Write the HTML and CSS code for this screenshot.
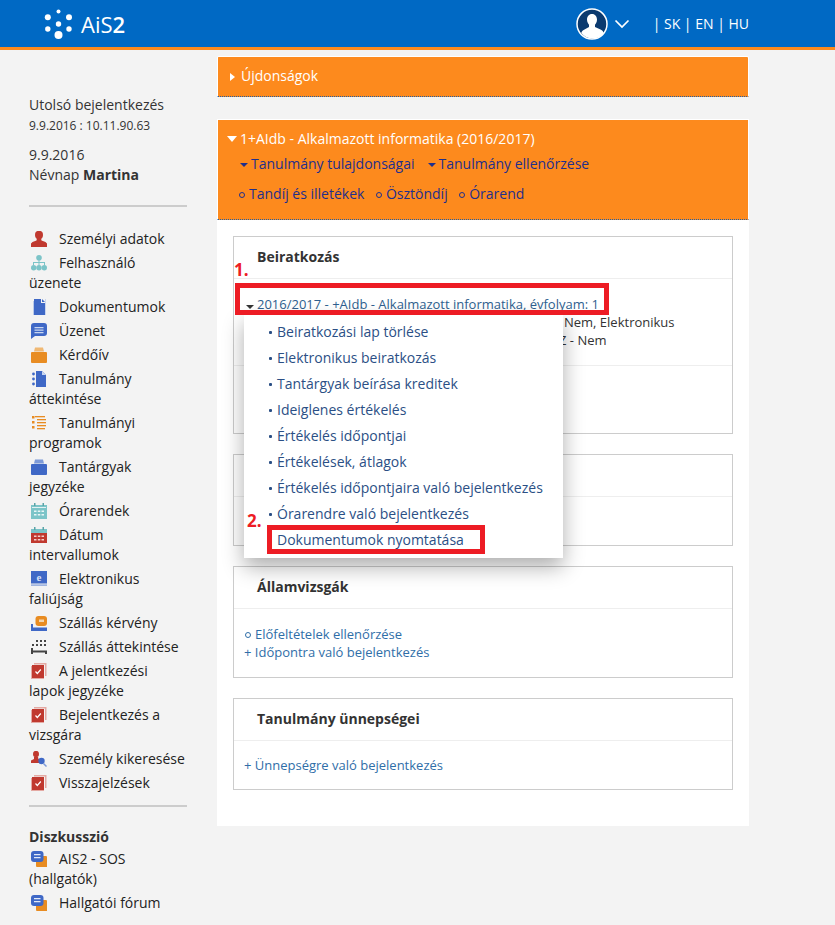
FILE: index.html
```html
<!DOCTYPE html>
<html lang="hu">
<head>
<meta charset="utf-8">
<title>AiS2</title>
<link rel="stylesheet" href="styles.css">
</head>
<body>
<svg class="defs" width="0" height="0" aria-hidden="true">
  <symbol id="i-person" viewBox="0 0 16 16"><ellipse cx="8" cy="4" rx="4" ry="4.2" fill="#c0392f"/><path d="M6 7h4l.5 2.5 4 1.5 1.500 1.500V16H0v-3.500L1.500 11l4-1.500z" fill="#c0392f"/></symbol>
  <symbol id="i-org" viewBox="0 0 16 16"><circle cx="8" cy="2.800" r="2.800" fill="#7cc4c8"/><path d="M7.500 4h1v3h5.500v3h-1V8H8.500v2h-1V8H3v2H2V7h5.500z" fill="#7cc4c8"/><circle cx="2.700" cy="12.800" r="2.700" fill="#7cc4c8"/><circle cx="8" cy="12.800" r="2.700" fill="#7cc4c8"/><circle cx="13.300" cy="12.800" r="2.700" fill="#7cc4c8"/></symbol>
  <symbol id="i-doc" viewBox="0 0 16 16"><path d="M2 2h1v13h10v1H2z" fill="#b9c9ea"/><path d="M3 0h7v4h4v12H3z" fill="#3f68c6"/><path d="M11 0l3 3h-3z" fill="#3f68c6"/><path d="M14 0h1v16h-1z" fill="#c9d6f0"/></symbol>
  <symbol id="i-msg" viewBox="0 0 16 16"><path d="M3 0h10a3 3 0 0 1 3 3v7a3 3 0 0 1-3 3H4l-4 3V3a3 3 0 0 1 3-3z" fill="#3f68c6"/><path d="M3.500 4h9v1.300h-9zM3.500 6.500h9v1.300h-9zM3.500 9h9v1.300h-9z" fill="#c9d6f0"/></symbol>
  <symbol id="i-case" viewBox="0 0 16 16"><path d="M4 .5h8l1 4H3z" fill="#f0b873"/><rect y="5" width="16" height="11" rx="1" fill="#e88c22"/></symbol>
  <symbol id="i-bag" viewBox="0 0 16 16"><path d="M4 .5h8l1 4H3z" fill="#7d9ad8"/><rect y="5" width="16" height="11" rx="1" fill="#3f68c6"/></symbol>
  <symbol id="i-study" viewBox="0 0 16 16"><path d="M5 0h6l4 4v12H5z" fill="#3f68c6"/><path d="M11 0l4 4h-4z" fill="#c9d6f0"/><circle cx="2.500" cy="3" r="1.400" fill="#3f68c6"/><circle cx="2.500" cy="8" r="1.400" fill="#3f68c6"/><circle cx="2.500" cy="13" r="1.400" fill="#3f68c6"/></symbol>
  <symbol id="i-prog" viewBox="0 0 16 16"><g fill="#e88c22"><rect x="4" y="1" width="10" height="1.300"/><rect x="6" y="4" width="9" height="1.300"/><rect x="6" y="7" width="9" height="1.300"/><rect x="6" y="10" width="9" height="1.300"/><rect x="6" y="13" width="8" height="1.300"/><rect x="1" y="1" width="2.500" height="2.500"/><rect x="1" y="6" width="2.500" height="2.500"/><rect x="1" y="11" width="2.500" height="2.500"/></g></symbol>
  <symbol id="i-cal" viewBox="0 0 16 16"><path d="M0 2h16v14H0z" fill="#7cc4c8"/><path d="M3 0h1.500v3H3zM11.500 0H13v3h-1.500z" fill="#5aa4a8"/><path d="M1 4h14v1H1z" fill="#e3f2f3"/><g fill="#eaf6f6"><rect x="3" y="7.500" width="2.500" height="1.500"/><rect x="6.800" y="7.500" width="2.500" height="1.500"/><rect x="10.500" y="7.500" width="2.500" height="1.500"/><rect x="3" y="11" width="2.500" height="1.500"/><rect x="6.800" y="11" width="2.500" height="1.500"/><rect x="10.500" y="11" width="2.500" height="1.500"/></g></symbol>
  <symbol id="i-calr" viewBox="0 0 16 16"><path d="M0 2h16v5H0z" fill="#7cc4c8"/><path d="M0 6h16v10H0z" fill="#c0392f"/><path d="M3 0h1.500v3H3zM11.500 0H13v3h-1.500z" fill="#5aa4a8"/><g fill="#f3d0cc"><rect x="3" y="8.500" width="2.500" height="1.500"/><rect x="6.800" y="8.500" width="2.500" height="1.500"/><rect x="10.500" y="8.500" width="2.500" height="1.500"/><rect x="3" y="12" width="2.500" height="1.500"/><rect x="6.800" y="12" width="2.500" height="1.500"/><rect x="10.500" y="12" width="2.500" height="1.500"/></g></symbol>
  <symbol id="i-bed" viewBox="0 0 16 16"><path d="M0 9h2v3.500h14V16H0z" fill="#3f68c6"/><rect x="4.500" y="1" width="11.500" height="10" rx="3" fill="#e88c22"/><rect x="8" y="4.500" width="5" height="2.500" fill="#f5d6ad"/></symbol>
  <symbol id="i-beds" viewBox="0 0 16 16"><g fill="#444"><rect x="5" y="1" width="2" height="2"/><rect x="9" y="1" width="2" height="2"/><rect x="13" y="1" width="2" height="2"/><rect x="1" y="5" width="2" height="2"/><rect x="5" y="5" width="2" height="2"/><rect x="9" y="5" width="2" height="2"/><rect x="13" y="5" width="2" height="2"/><path d="M0 9h2v2.500h14V15h-2v-1.500H2V15H0z"/></g></symbol>
  <symbol id="i-check" viewBox="0 0 16 16"><path d="M3 0h12.500v13h-1.500V1.500H3z" fill="#e4a9a3"/><path d="M0 3h1v12h12v1H0z" fill="#e4a9a3"/><rect x="1" y="2" width="12" height="13" fill="#c0392f"/><path d="M4.500 8.500l1.800 2 3.500-4" fill="none" stroke="#fff" stroke-width="1.200"/></symbol>
  <symbol id="i-search" viewBox="0 0 16 16"><ellipse cx="5" cy="3" rx="3" ry="3.200" fill="#c0392f"/><path d="M3 6h4l.5 2 2 1-1.500 3H0V9.500L3 8z" fill="#c0392f"/><circle cx="10.500" cy="10" r="3.200" fill="#3f68c6"/><path d="M12.500 12.500l3 3" stroke="#7d9ad8" stroke-width="1.500"/></symbol>
  <symbol id="i-forum" viewBox="0 0 16 16"><path d="M8 5h7a1 1 0 0 1 1 1v10H6a1 1 0 0 1-1-1V8z" fill="#e88c22"/><rect width="12.500" height="11" rx="3" fill="#3f68c6"/><path d="M3 3h6.500v1.300H3zM3 6h6.500v1.300H3z" fill="#e3eaf8"/></symbol>
</svg>

<header class="topbar">
  <a class="logo">
    <svg class="logo-dots" width="30" height="32" viewBox="0 0 30 32" aria-hidden="true">
      <g fill="#fff"><circle cx="14.500" cy="2.500" r="2"/><circle cx="3.800" cy="8.300" r="3"/><circle cx="25" cy="8.300" r="3"/><circle cx="14.500" cy="15" r="2.700"/><circle cx="3.800" cy="20" r="2.700"/><circle cx="25" cy="20" r="2.700"/><circle cx="14.500" cy="26" r="4"/></g>
    </svg>
    <span class="logo-text">AiS<b>2</b></span>
  </a>
  <div class="top-right">
    <svg class="avatar" width="32" height="32" viewBox="0 0 32 32" aria-hidden="true">
      <circle cx="16" cy="16" r="15" fill="#0b3a6f" stroke="#fff" stroke-width="1.500"/>
      <path d="M16 6c3.200 0 5 2.500 5 5.500 0 2.300-1 4.200-2 5.300v2.200l5.500 2.500c2 1 2.800 2 3.200 3.500A14.500 14.500 0 0 1 16 30.500 14.500 14.500 0 0 1 5.300 25c.4-1.500 1.200-2.500 3.200-3.500L13 19v-2.200c-1-1.100-2-3-2-5.300C11 8.500 12.800 6 16 6z" fill="#fff"/>
    </svg>
    <svg class="chevron" width="16" height="10" viewBox="0 0 16 10" aria-hidden="true"><path d="M1.500 1.500L8 8l6.500-6.500" fill="none" stroke="#fff" stroke-width="1.700"/></svg>
    <nav class="langs">| SK | EN | HU</nav>
  </div>
</header>

<div class="layout">
  <aside class="sidebar">
    <p class="login">Utolsó bejelentkezés<br><small>9.9.2016 : 10.11.90.63</small></p>
    <p class="today">9.9.2016<br>Névnap <b>Martina</b></p>
    <hr class="rule">
    <ul class="menu">
      <li><svg class="ico"><use href="#i-person"/></svg>Személyi adatok</li>
      <li><svg class="ico"><use href="#i-org"/></svg>Felhasználó üzenete</li>
      <li><svg class="ico"><use href="#i-doc"/></svg>Dokumentumok</li>
      <li><svg class="ico"><use href="#i-msg"/></svg>Üzenet</li>
      <li><svg class="ico"><use href="#i-case"/></svg>Kérdőív</li>
      <li><svg class="ico"><use href="#i-study"/></svg>Tanulmány áttekintése</li>
      <li><svg class="ico"><use href="#i-prog"/></svg>Tanulmányi programok</li>
      <li><svg class="ico"><use href="#i-bag"/></svg>Tantárgyak jegyzéke</li>
      <li><svg class="ico"><use href="#i-cal"/></svg>Órarendek</li>
      <li><svg class="ico"><use href="#i-calr"/></svg>Dátum intervallumok</li>
      <li><svg class="ico" viewBox="0 0 16 16"><rect width="16" height="12.500" fill="#3f68c6"/><rect y="13.500" width="16" height="1.200" fill="#7d9ad8"/><text x="8" y="10" text-anchor="middle" class="ico-e">e</text></svg>Elektronikus faliújság</li>
      <li><svg class="ico"><use href="#i-bed"/></svg>Szállás kérvény</li>
      <li><svg class="ico"><use href="#i-beds"/></svg>Szállás áttekintése</li>
      <li><svg class="ico"><use href="#i-check"/></svg>A jelentkezési<br>lapok jegyzéke</li>
      <li><svg class="ico"><use href="#i-check"/></svg>Bejelentkezés a vizsgára</li>
      <li><svg class="ico"><use href="#i-search"/></svg>Személy kikeresése</li>
      <li><svg class="ico"><use href="#i-check"/></svg>Visszajelzések</li>
    </ul>
    <hr class="rule rule-low">
    <h3 class="side-title">Diszkusszió</h3>
    <ul class="menu menu-forum">
      <li><svg class="ico"><use href="#i-forum"/></svg>AIS2 - SOS (hallgatók)</li>
      <li><svg class="ico"><use href="#i-forum"/></svg>Hallgatói fórum</li>
    </ul>
  </aside>

  <main class="main">
    <section class="banner banner-news">
      <span class="tri-right"></span>Újdonságok
    </section>

    <div class="study">
      <section class="banner banner-study">
        <div class="study-title"><span class="tri-down"></span>1+AIdb - Alkalmazott informatika (2016/2017)</div>
        <div class="study-links">
          <a class="sl"><span class="tri-navy"></span>Tanulmány tulajdonságai</a>
          <a class="sl"><span class="tri-navy"></span>Tanulmány ellenőrzése</a>
        </div>
        <div class="study-links study-links-2">
          <a class="sl"><span class="ring"></span>Tandíj és illetékek</a>
          <a class="sl"><span class="ring"></span>Ösztöndíj</a>
          <a class="sl"><span class="ring"></span>Órarend</a>
        </div>
      </section>

      <div class="study-body">
        <section class="card card-enrol">
          <h2 class="card-head">Beiratkozás</h2>
          <div class="enrol-body">
            <a class="enrol-link"><span class="tri-dark"></span><u>2016/2017 - +AIdb - Alkalmazott informatika, évfolyam: 1</u></a>
            <p class="enrol-line">Nem, Elektronikus</p>
            <p class="enrol-line enrol-line-2">Z - Nem</p>
          </div>
          <div class="enrol-foot"></div>
        </section>

        <section class="card card-hidden">
          <h2 class="card-head">&nbsp;</h2>
        </section>

        <section class="card card-exam">
          <h2 class="card-head">Államvizsgák</h2>
          <div class="card-links">
            <a class="blue-link"><span class="ring ring-blue"></span>Előfeltételek ellenőrzése</a>
            <a class="blue-link">+ Időpontra való bejelentkezés</a>
          </div>
        </section>

        <section class="card card-grad">
          <h2 class="card-head">Tanulmány ünnepségei</h2>
          <div class="card-links card-links-tight">
            <a class="blue-link">+ Ünnepségre való bejelentkezés</a>
          </div>
        </section>

        <ul class="dropdown">
          <li>Beiratkozási lap törlése</li>
          <li>Elektronikus beiratkozás</li>
          <li>Tantárgyak beírása kreditek</li>
          <li>Ideiglenes értékelés</li>
          <li>Értékelés időpontjai</li>
          <li>Értékelések, átlagok</li>
          <li>Értékelés időpontjaira való bejelentkezés</li>
          <li>Órarendre való bejelentkezés</li>
          <li>Dokumentumok nyomtatása</li>
        </ul>
        <div class="mark mark-1"></div>
        <div class="mark mark-2"></div>
        <span class="mark-label label-1">1.</span>
        <span class="mark-label label-2">2.</span>
      </div>
    </div>
  </main>
</div>
</body>
</html>
```

FILE: styles.css
```css
* { box-sizing: border-box; }
html, body { margin: 0; padding: 0; }
body {
  background: #f3f3f3;
  color: #333;
  font-family: "Open Sans", "Liberation Sans", sans-serif;
  font-size: 14px;
  line-height: 20px;
  height: 925px;
  overflow: hidden;
}
.defs { position: absolute; }

/* top bar */
.topbar {
  height: 50px;
  background: #0069c4;
  border-bottom: 3px solid #fd8a1d;
  display: flex;
  align-items: center;
  padding: 0 86px 0 44px;
  color: #fff;
}
.logo { display: flex; align-items: center; gap: 7px; }
.logo-dots { display: block; margin-top: 3px; }
.logo-text { font-size: 22px; line-height: 30px; }
.logo-text b { font-weight: 600; }
.top-right { margin-left: auto; display: flex; align-items: center; }
.avatar { display: block; }
.chevron { display: block; margin-left: 6px; }
.langs { margin-left: 23px; font-size: 14px; }

/* layout */
.layout { display: flex; align-items: flex-start; padding-left: 29px; }
.sidebar { width: 158px; padding-top: 45px; flex: none; }
.login, .today { margin: 0; }
.login small { font-size: 12px; }
.today { margin-top: 9px; }
.rule { border: 0; height: 2px; background: #ccc; margin: 20px 0 22px; }
.rule-low { margin: 12px 0 20px; }
.menu { list-style: none; margin: 0; padding: 0; color: #222; }
.menu li { margin-bottom: 4px; }
.ico { width: 16px; height: 16px; margin: 0 12px 0 2px; vertical-align: -3px; }
.ico-e { font-family: "Liberation Serif", serif; font-size: 11px; font-weight: 700; fill: #d5e0f5; }
.side-title { margin: 0 0 2px; font-size: 14px; line-height: 20px; font-weight: 700; }

/* main */
.main { width: 532px; margin-left: 30px; flex: none; padding-top: 6px; }
.banner {
  background: #fd8a1d;
  border: 1px solid #fff;
  border-bottom: 1px dotted #1f5fa8;
}
.banner-news {
  height: 41px;
  color: #fff;
  padding: 9px 0 0 12px;
  border-radius: 2px 2px 0 0;
}
.tri-right {
  display: inline-block;
  border-left: 5px solid #fff;
  border-top: 4.500px solid transparent;
  border-bottom: 4.500px solid transparent;
  margin-right: 6px;
}
.study { margin-top: 22px; background: #fff; height: 707px; }
.banner-study { height: 101px; padding: 9px 0 0 9px; }
.study-title { color: #fff; }
.tri-down {
  display: inline-block;
  border-top: 6px solid #fff;
  border-left: 5px solid transparent;
  border-right: 5px solid transparent;
  margin-right: 3px;
  vertical-align: 2px;
}
.study-links { display: flex; gap: 13px; margin: 5px 0 0 13px; color: #1f2f8c; }
.study-links-2 { margin: 10px 0 0 12px; gap: 11.500px; }
.sl { white-space: nowrap; }
.tri-navy {
  display: inline-block;
  border-top: 4px solid #1f2f8c;
  border-left: 4px solid transparent;
  border-right: 4px solid transparent;
  margin-right: 3px;
  vertical-align: 2px;
}
.ring {
  display: inline-block;
  width: 6px;
  height: 6px;
  border: 1px solid #1f2f8c;
  border-radius: 50%;
  margin-right: 4px;
  vertical-align: 1px;
}
.ring-blue { border-color: #2f6ea8; margin-left: 1px; }

.study-body { position: relative; padding: 16px 16px 0; }
.card { background: #fff; border: 1px solid #ccc; margin-bottom: 20px; }
.card-head {
  margin: 0;
  height: 42px;
  padding: 10px 0 0 23px;
  font-size: 14px;
  line-height: 20px;
  font-weight: 700;
  color: #333;
  border-bottom: 1px solid #eee;
}
.enrol-body { height: 87px; padding: 16px 0 0 9px; font-size: 13px; line-height: 18px; border-bottom: 1px solid #eee; }
.enrol-link { display: block; color: #2f5f8f; white-space: nowrap; }
.tri-dark {
  display: inline-block;
  border-top: 4px solid #333;
  border-left: 4px solid transparent;
  border-right: 4px solid transparent;
  margin: 0 3px 0 3px;
  vertical-align: 0;
}
.enrol-line { margin: 0 0 0 321px; }
.enrol-line-2 { margin-left: 316px; }
.enrol-foot { height: 67px; }
.card-hidden { height: 92px; }
.card-exam { height: 112px; }
.card-grad { height: 92px; }
.card-links { padding: 16px 0 0 10px; font-size: 13px; line-height: 18px; }
.card-links-tight { padding-top: 15px; }
.blue-link { display: block; color: #2f6ea8; }

/* dropdown over the enrolment card */
.dropdown {
  position: absolute;
  left: 27px;
  top: 94px;
  width: 319px;
  height: 244px;
  margin: 0;
  padding: 5px 0 0;
  list-style: none;
  background: #fff;
  font-size: 14px;
  line-height: 26px;
  color: #2b4f85;
  box-shadow: 0 9px 20px rgba(0, 0, 0, .32);
}
.dropdown li { padding-left: 33px; position: relative; white-space: nowrap; }
.dropdown li::before {
  content: "";
  position: absolute;
  left: 25px;
  top: 12px;
  width: 3px;
  height: 3px;
  border-radius: 1px;
  background: #2b4f85;
}

/* red annotations */
.mark { position: absolute; border: 5px solid #ed1c24; }
.mark-1 { left: 18px; top: 63px; width: 374px; height: 32px; }
.mark-2 { left: 50px; top: 305px; width: 218px; height: 29px; }
.mark-label { position: absolute; color: #ed1c24; font-weight: 700; font-size: 17px; line-height: 20px; }
.label-1 { left: 17px; top: 40px; }
.label-2 { left: 30px; top: 291px; }
```
